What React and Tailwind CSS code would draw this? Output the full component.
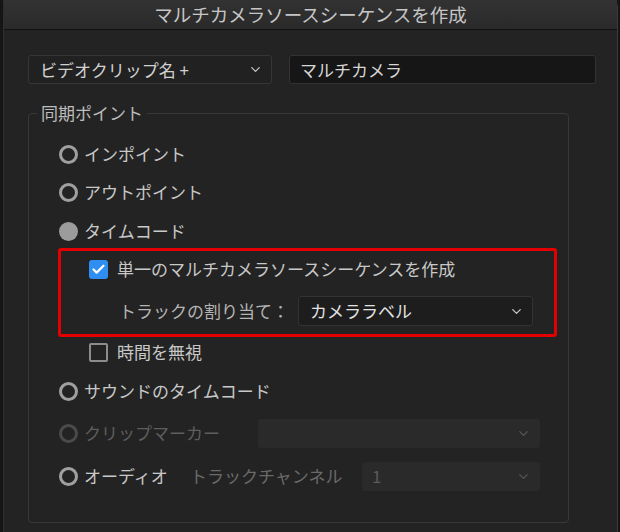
import { ChevronDown, Check } from 'lucide-react';

const FONT = { fontFamily: '"Noto Sans CJK JP", "Noto Sans", sans-serif' };

function Radio({ state = 'off' }) {
    if (state === 'on') {
        return <span className="block w-[19px] h-[19px] rounded-full bg-[#9c9c9c] shrink-0" />;
    }
    const color = state === 'disabled' ? 'border-[#4a4a4a]' : 'border-[#a0a0a0]';
    return <span className={`block w-[19px] h-[19px] rounded-full border-[3px] shrink-0 ${color}`} />;
}

function Select({ className, value, textClass = 'text-[#5a5a5a]', chevron = 'text-[#555]', bg = 'bg-[#2a2a2a]' }) {
    return (
        <div className={`flex items-center justify-between rounded-[3px] ${bg} ${className}`}>
            <span className={textClass}>{value}</span>
            <ChevronDown size={15} strokeWidth={2} className={chevron} />
        </div>
    );
}

export default function App() {
    return (
        <div className="w-[620px] h-[532px] bg-[#151515] flex text-[17px] text-[#c8c8c8] overflow-hidden" style={FONT}>
            <div className="ml-[3px] w-[615px] h-full bg-[#232323] border-l border-[#2e2e2e] border-r border-r-[#3a3a3a] rounded-tr-[7px] flex flex-col">
                <div className="h-[30px] shrink-0 bg-gradient-to-b from-[#323232] to-[#2a2a2a] border-b border-[#111] flex items-center justify-center text-[18.5px] text-[#c6c6c6] leading-none">
                    マルチカメラソースシーケンスを作成
                </div>

                <div className="flex items-center pl-[24px] mt-[25px] gap-[17px]">
                    <div className="w-[244px] h-[29px] bg-[#212121] border border-[#363636] rounded-[3px] flex items-center justify-between pl-[11px] pr-[8px]">
                        <span className="text-[#d0d0d0]">ビデオクリップ名 +</span>
                        <ChevronDown size={15} strokeWidth={2} className="text-[#c8c8c8]" />
                    </div>
                    <div className="w-[307px] h-[29px] bg-[#161616] border border-[#333] rounded-[3px] flex items-center pl-[10px] text-[#d6d6d6]">
                        マルチカメラ
                    </div>
                </div>

                <fieldset className="ml-[24px] mt-[17px] w-[541px] border border-[#383838] rounded-[4px] pl-[30px] pb-[31px]">
                    <legend className="ml-[-22px] px-[4px] leading-[24px] text-[#bdbdbd]">同期ポイント</legend>

                    <div className="mt-[17px] h-[24px] flex items-center gap-[6px]">
                        <Radio />
                        <span>インポイント</span>
                    </div>
                    <div className="mt-[14px] h-[24px] flex items-center gap-[6px]">
                        <Radio />
                        <span>アウトポイント</span>
                    </div>
                    <div className="mt-[15px] h-[24px] flex items-center gap-[6px]">
                        <Radio state="on" />
                        <span>タイムコード</span>
                    </div>

                    <div className="mt-[5px] ml-[-1px] w-[499px] border-[3px] border-[#e40000] rounded-[3px] pl-[28px] pr-[21px] pt-[6px] pb-[8px]">
                        <div className="h-[24px] flex items-center gap-[9px]">
                            <span className="w-[19px] h-[19px] rounded-[3px] bg-[#2f8ef2] flex items-center justify-center shrink-0">
                                <Check size={15} strokeWidth={3.5} className="text-white" />
                            </span>
                            <span>単一のマルチカメラソースシーケンスを作成</span>
                        </div>
                        <div className="mt-[15px] h-[30px] flex items-center pl-[30px]">
                            <span className="text-[#b4b4b4] w-[179px]">トラックの割り当て：</span>
                            <Select
                                className="flex-1 h-[30px] border border-[#333] pl-[11px] pr-[8px]"
                                bg="bg-[#1d1d1d]"
                                value="カメララベル"
                                textClass="text-[#e2e2e2]"
                                chevron="text-[#c8c8c8]"
                            />
                        </div>
                    </div>

                    <div className="mt-[3px] ml-[30px] h-[24px] flex items-center gap-[9px]">
                        <span className="w-[19px] h-[19px] rounded-[2px] border-[2.5px] border-[#8c8c8c] shrink-0" />
                        <span>時間を無視</span>
                    </div>

                    <div className="mt-[15px] h-[24px] flex items-center gap-[6px]">
                        <Radio />
                        <span>サウンドのタイムコード</span>
                    </div>

                    <div className="mt-[15px] h-[30px] flex items-center">
                        <div className="w-[199px] flex items-center gap-[6px]">
                            <Radio state="disabled" />
                            <span className="text-[#5e5e5e]">クリップマーカー</span>
                        </div>
                        <Select className="w-[282px] h-[29px] pl-[10px] pr-[9px]" value="" />
                    </div>

                    <div className="mt-[13px] h-[30px] flex items-center">
                        <div className="w-[131px] flex items-center gap-[6px]">
                            <Radio />
                            <span>オーディオ</span>
                        </div>
                        <span className="w-[172px] text-[#6a6a6a]">トラックチャンネル</span>
                        <Select className="w-[178px] h-[29px] pl-[10px] pr-[9px]" value="1" />
                    </div>
                </fieldset>
            </div>
        </div>
    );
}
